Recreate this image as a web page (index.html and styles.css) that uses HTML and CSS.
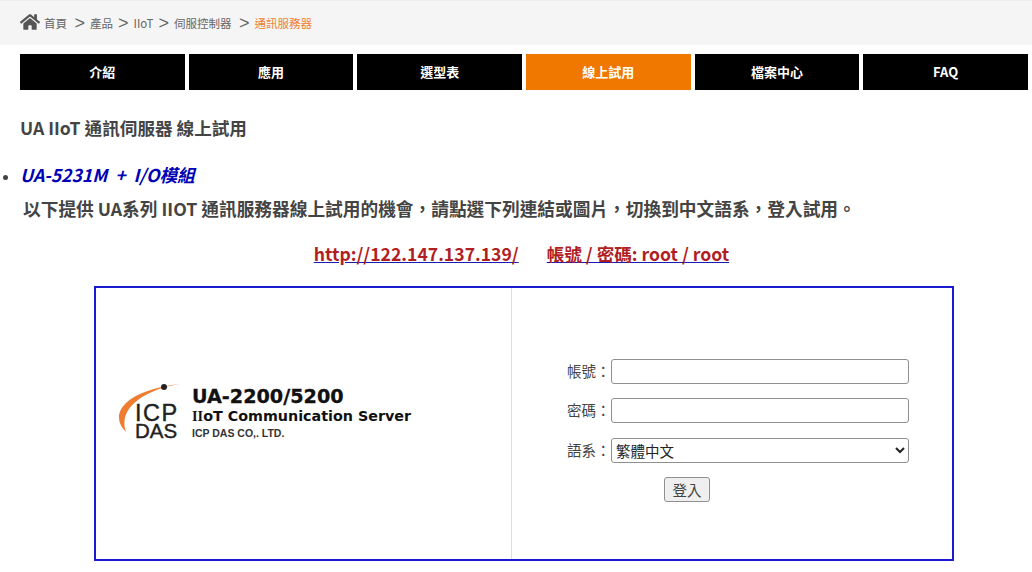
FILE: index.html
```html
<!DOCTYPE html>
<html lang="zh-Hant">
<head>
  <meta charset="UTF-8">
  <title>UA IIoT 通訊伺服器 線上試用</title>
  <meta name="viewport" content="width=device-width, initial-scale=1.0"/>
  <link rel="stylesheet" href="styles.css">
</head>
<body>
  <div class="breadcrumb">
    <svg class="home-icon" viewBox="0 0 576 512" width="20" height="18"><path fill="#555" d="M280 148 96 300v164c0 9 7 16 16 16l112-.3c9 0 16-7 16-16V368c0-9 7-16 16-16h64c9 0 16 7 16 16v95.600c0 9 7 16 16 16l112 .4c9 0 16-7 16-16V300L296 148c-4-3-12-3-16 0zM572 251l-84-69V44c0-7-5-12-12-12h-56c-7 0-12 5-12 12v72l-89-74c-18-14-43-14-61 0L4 251c-5 4-6 12-2 17l26 31c4 5 12 6 17 2L280 107c4-3 12-3 16 0l235 194c5 4 13 3 17-2l26-31c4-5 3-13-2-17z"/></svg>
    <a class="crumb" href="#">首頁</a><span class="sep sep-wide">&gt;</span>
    <a class="crumb" href="#">產品</a><span class="sep">&gt;</span>
    <a class="crumb" href="#">IIoT</a><span class="sep">&gt;</span>
    <a class="crumb" href="#">伺服控制器</a><span class="sep sep-wide">&gt;</span>
    <a class="crumb current" href="#">通訊服務器</a>
  </div>

  <div class="tabs">
    <a class="tab" href="#">介紹</a>
    <a class="tab" href="#">應用</a>
    <a class="tab" href="#">選型表</a>
    <a class="tab active" href="#">線上試用</a>
    <a class="tab" href="#">檔案中心</a>
    <a class="tab" href="#">FAQ</a>
  </div>

  <h1>UA IIoT 通訊伺服器 線上試用</h1>

  <ul class="models">
    <li>UA-5231M &nbsp;+&nbsp; I/O模組</li>
  </ul>
  <p class="intro">以下提供 UA系列 IIOT 通訊服務器線上試用的機會，請點選下列連結或圖片，切換到中文語系，登入試用。</p>

  <div class="links">
    <a href="#">http://122.147.137.139/</a>
    <a href="#">帳號 / 密碼: root / root</a>
  </div>

  <div class="demo">
    <div class="demo-logo">
      <div class="logo">
        <div class="logo-mark">
          <svg class="logo-arc" viewBox="0 0 70 52" width="70" height="52"><path fill="#ee7d31" d="M13 50C-4 34 8 9 67 2 34 7 4 25 13 50z"/><circle cx="51" cy="5" r="3" fill="#222"/></svg>
          <div class="logo-icp">ICP</div>
          <div class="logo-das">DAS</div>
        </div>
        <div class="logo-text">
          <div class="logo-model">UA-2200/5200</div>
          <div class="logo-sub"><span class="logo-serif">II</span>oT Communication Server</div>
          <div class="logo-co">ICP DAS CO,. LTD.</div>
        </div>
      </div>
    </div>
    <form class="login">
      <div class="field"><label for="user">帳號：</label><input id="user" type="text"></div>
      <div class="field"><label for="pass">密碼：</label><input id="pass" type="password"></div>
      <div class="field"><label for="lang">語系：</label>
        <select id="lang"><option>繁體中文</option></select>
      </div>
      <button type="button" class="submit">登入</button>
    </form>
  </div>
</body>
</html>
```

FILE: styles.css
```css
body { font-family: "Noto Sans CJK TC", sans-serif; background: #fff; color: #444; margin: 0; height: 572px; overflow: hidden; }
a { text-decoration: none; }

.breadcrumb { height: 45px; background: #f5f5f5; border-top: 1px solid #eee; padding-left: 20px; display: flex; align-items: center; font-size: 11.5px; color: #666; box-sizing: border-box; }
.home-icon { margin-right: 4px; margin-top: -3px; }
.crumb { color: #666; }
.crumb.current { color: #ee8133; }
.sep { font-size: 18px; font-weight: 300; margin: 0 5px; font-family: "Liberation Sans", sans-serif; }
.sep-wide { margin-left: 7.5px; }

.tabs { display: flex; gap: 4px; margin: 9px 4px 0 20px; }
.tab { flex: 1; height: 36px; padding-bottom: 2px; box-sizing: border-box; background: #000; color: #fff; font-size: 13px; font-weight: bold; display: flex; align-items: center; justify-content: center; }
.tab.active { background: #f07800; }

h1 { font-size: 17.6px; font-weight: bold; color: #444; margin: 24px 0 0 20px; line-height: 28px; }

.models { margin: 19px 0 0; padding: 0 0 0 20px; font-size: 17.6px; font-weight: bold; font-style: italic; color: #0000b4; line-height: 28px; }
.models li::marker { color: #444; font-size: 14px; }
.intro { margin: 6px 0 0 23px; font-size: 17.7px; font-weight: bold; color: #444; line-height: 26px; white-space: nowrap; }

.links { display: flex; justify-content: center; gap: 28px; margin-top: 19px; padding-left: 11px; font-size: 17.6px; font-weight: bold; line-height: 28px; }
.links a { color: #b01e23; text-decoration: underline; text-decoration-color: #1a1ab4; }

.demo { display: flex; width: 860px; height: 275px; margin: 18px 0 0 94px; border: 2px solid #1a1ad0; box-sizing: border-box; }
.demo-logo { width: 415px; border-right: 1px solid #ddd; }
.logo { display: flex; align-items: flex-start; margin: 94px 0 0 20px; }
.logo-mark { position: relative; width: 68px; height: 58px; color: #222; font-family: "Liberation Sans", sans-serif; padding: 22px 0 0 19px; box-sizing: border-box; -webkit-text-stroke: 0.4px #222; }
.logo-arc { position: absolute; left: -3px; top: 0; }
.logo-icp { font-size: 23.5px; line-height: 18px; letter-spacing: 1.5px; }
.logo-das { font-size: 20.5px; line-height: 18px; }
.logo-text { color: #111; font-weight: bold; margin: 4px 0 0 8px; white-space: nowrap; }
.logo-model { font-size: 19.2px; line-height: 22px; font-family: "DejaVu Sans", sans-serif; -webkit-text-stroke: 0.3px #111; }
.logo-sub { font-size: 14.3px; line-height: 16px; font-family: "DejaVu Sans", sans-serif; }
.logo-serif { font-family: "Liberation Serif", serif; }
.logo-co { font-size: 10.5px; line-height: 18px; color: #333; font-family: "Liberation Sans", sans-serif; }

.login { flex: 1; padding: 70px 0 0 55px; }
.field { display: flex; align-items: center; margin-bottom: 13.5px; height: 26px; }
.field label { width: 44px; flex-shrink: 0; white-space: nowrap; padding-bottom: 2px; font-size: 14.5px; color: #444; }
.field input, .field select { width: 298px; height: 25px; box-sizing: border-box; border: 1px solid #8f8f8f; border-radius: 3px; background: #fff; font-family: "Noto Sans CJK TC", sans-serif; font-size: 14.5px; color: #222; padding: 0; }
.submit { display: block; margin-left: 97px; width: 46px; height: 25px; border: 1px solid #8f8f8f; border-radius: 3px; background: #efefef; color: #444; font-family: "Noto Sans CJK TC", sans-serif; font-size: 14.5px; padding: 0; }
```
